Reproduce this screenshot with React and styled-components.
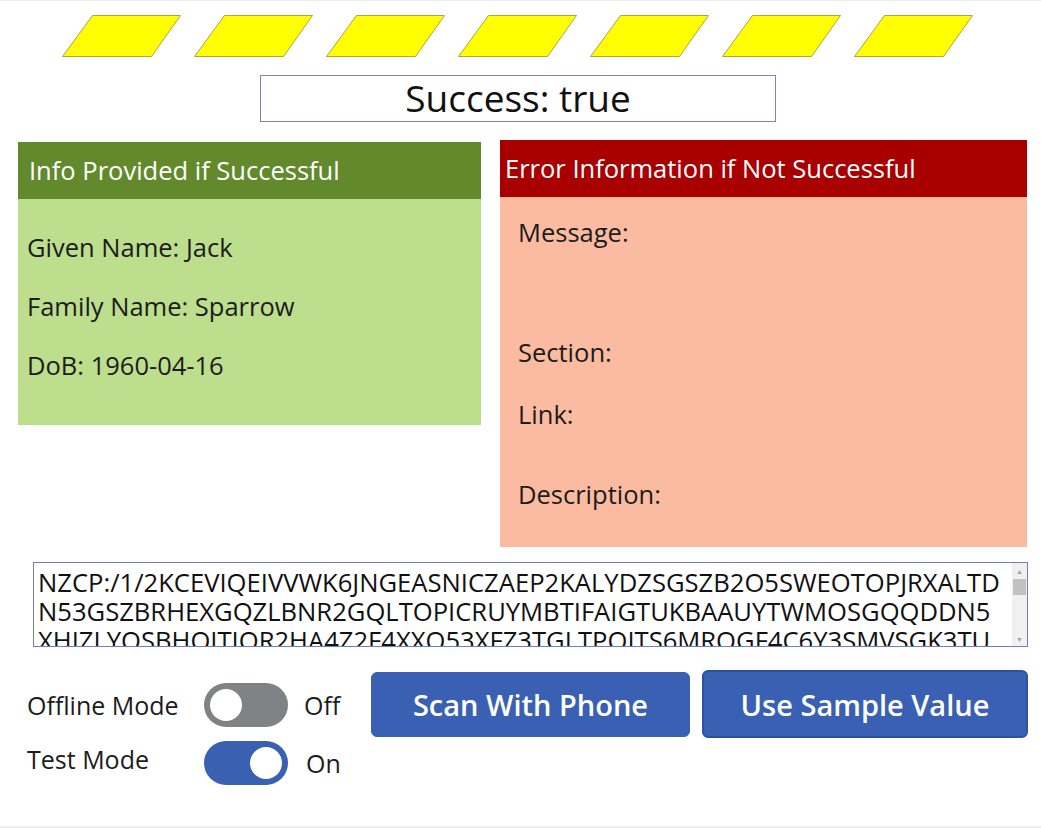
import styled, { createGlobalStyle } from "styled-components";

const GlobalStyle = createGlobalStyle`
  html, body {
    margin: 0;
    padding: 0;
    background: #ffffff;
  }
  body {
    font-family: "Open Sans", "Noto Sans", sans-serif;
    color: #1a1a1a;
  }
`;

const Screen = styled.div`
  width: 1041px;
  height: 828px;
  box-sizing: border-box;
  border-top: 1px solid #ececec;
  border-bottom: 2px solid #efefef;
  overflow: hidden;
  display: flex;
  flex-direction: column;
`;

const Stripes = styled.div`
  display: flex;
  gap: 12px;
  padding: 13px 0 0 62px;
  height: 43px;
`;

const Status = styled.div`
  margin: 18px 0 0 260px;
  width: 516px;
  height: 47px;
  box-sizing: border-box;
  border: 1px solid #7a86c2;
  display: flex;
  align-items: center;
  justify-content: center;
  font-size: 37px;
  line-height: 1;
  color: #111;
  padding-bottom: 2px;
`;

const Panels = styled.div`
  display: flex;
  align-items: flex-start;
  gap: 19px;
  margin: 18px 0 0 18px;
`;

const Panel = styled.div`
  width: ${(p) => p.$w}px;
  margin-top: ${(p) => p.$top || 0}px;
  display: flex;
  flex-direction: column;
`;

const PanelHead = styled.div`
  height: 57px;
  background: ${(p) => p.$bg};
  color: #fff;
  font-size: 25.5px;
  display: flex;
  align-items: center;
  padding-left: ${(p) => p.$pad}px;
  padding-bottom: 2px;
  box-sizing: border-box;
  white-space: nowrap;
`;

const PanelBody = styled.div`
  height: ${(p) => p.$h}px;
  background: ${(p) => p.$bg};
  box-sizing: border-box;
  padding: ${(p) => p.$pad};
  display: flex;
  flex-direction: column;
`;

const Line = styled.div`
  font-size: 25.5px;
  line-height: 32px;
  height: ${(p) => p.$h}px;
  color: #1c1c1c;
`;

const CodeBox = styled.div`
  margin: 15px 0 0 33px;
  width: 995px;
  height: 85px;
  box-sizing: border-box;
  border: 1px solid #6f7fc0;
  display: flex;
  overflow: hidden;
`;

const CodeText = styled.div`
  flex: 1;
  overflow: hidden;
  padding: 5px 0 0 4px;
`;

const CodeLine = styled.div`
  font-size: 25.6px;
  line-height: 29px;
  white-space: pre;
  color: #111;
`;

const ScrollTrack = styled.div`
  width: 15px;
  background: #f0f0f0;
  display: flex;
  flex-direction: column;
  align-items: center;
`;

const Arrow = styled.div`
  height: 14px;
  display: flex;
  align-items: center;
  justify-content: center;
  font-size: 7px;
  color: #a3a3a3;
  margin-top: ${(p) => p.$top || 0}px;
`;

const Thumb = styled.div`
  width: 13px;
  height: 16px;
  background: #c1c1c1;
  margin-top: 1px;
`;

const Bottom = styled.div`
  display: flex;
  margin: 23px 0 0 27px;
  align-items: flex-start;
`;

const Toggles = styled.div`
  display: flex;
  flex-direction: column;
  width: 344px;
  padding-top: 12px;
`;

const ToggleRow = styled.div`
  display: flex;
  align-items: center;
  height: 46px;
  margin-bottom: ${(p) => p.$mb || 0}px;
`;

const ToggleLabel = styled.div`
  width: 177px;
  font-size: 25px;
  color: #1c1c1c;
  white-space: nowrap;
  transform: translateY(${(p) => p.$dy || 0}px);
`;

const Switch = styled.div`
  width: 84px;
  height: 44px;
  border-radius: 22px;
  background: ${(p) => (p.$on ? "#3a60b2" : "#818285")};
  display: flex;
  align-items: center;
  justify-content: ${(p) => (p.$on ? "flex-end" : "flex-start")};
  padding: 0 6px;
  box-sizing: border-box;
`;

const Knob = styled.div`
  width: 32px;
  height: 32px;
  border-radius: 50%;
  background: #fff;
`;

const ToggleValue = styled.div`
  margin-left: ${(p) => p.$ml}px;
  font-size: 25px;
  color: #1c1c1c;
`;

const Button = styled.button`
  width: ${(p) => p.$w}px;
  height: ${(p) => p.$h}px;
  margin-top: ${(p) => p.$top || 0}px;
  margin-right: 12px;
  background: #3960b3;
  border: ${(p) => (p.$outlined ? "2px solid #2f51a0" : "1px solid #3960b3")};
  border-radius: 6px;
  color: #fff;
  font-family: "Open Sans", "Noto Sans", sans-serif;
  font-size: 29px;
  font-weight: 600;
  cursor: pointer;
  padding: 0;
`;

function Stripe() {
  return (
    <svg width="120" height="44" viewBox="0 0 120 44">
      <polygon
        points="30.5,1.5 118.5,1.5 89.5,42.5 0.5,42.5"
        fill="#ffff00"
        stroke="#a8a64a"
        strokeWidth="1"
      />
    </svg>
  );
}

const codeLines = [
  "NZCP:/1/2KCEVIQEIVVWK6JNGEASNICZAEP2KALYDZSGSZB2O5SWEOTOPJRXALTD",
  "N53GSZBRHEXGQZLBNR2GQLTOPICRUYMBTIFAIGTUKBAAUYTWMOSGQQDDN5",
  "XHIZLYOSBHOITIQR2HA4Z2F4XXQ53XFZ3TGLTPOITS6MROGF4C6Y3SMVSGK3TU",
];

export default function App() {
  return (
    <>
      <GlobalStyle />
      <Screen>
        <Stripes>
          {Array.from({ length: 7 }).map((_, i) => (
            <Stripe key={i} />
          ))}
        </Stripes>

        <Status>Success: true</Status>

        <Panels>
          <Panel $w={463} $top={2}>
            <PanelHead $bg="#628a2c" $pad={11}>
              Info Provided if Successful
            </PanelHead>
            <PanelBody $bg="#bdde8c" $h={226} $pad="32px 0 0 9px">
              <Line $h={59}>Given Name: Jack</Line>
              <Line $h={59}>Family Name: Sparrow</Line>
              <Line $h={59}>DoB: 1960-04-16</Line>
            </PanelBody>
          </Panel>

          <Panel $w={527}>
            <PanelHead $bg="#a80000" $pad={5}>
              Error Information if Not Successful
            </PanelHead>
            <PanelBody $bg="#fbbba0" $h={350} $pad="19px 0 0 18px">
              <Line $h={120}>Message:</Line>
              <Line $h={62}>Section:</Line>
              <Line $h={80}>Link:</Line>
              <Line $h={40}>Description:</Line>
            </PanelBody>
          </Panel>
        </Panels>

        <CodeBox>
          <CodeText>
            {codeLines.map((l) => (
              <CodeLine key={l}>{l}</CodeLine>
            ))}
          </CodeText>
          <ScrollTrack>
            <Arrow $top={1}>▲</Arrow>
            <Thumb />
            <Arrow $top={37}>▼</Arrow>
          </ScrollTrack>
        </CodeBox>

        <Bottom>
          <Toggles>
            <ToggleRow $mb={12}>
              <ToggleLabel>Offline Mode</ToggleLabel>
              <Switch>
                <Knob />
              </Switch>
              <ToggleValue $ml={16}>Off</ToggleValue>
            </ToggleRow>
            <ToggleRow>
              <ToggleLabel $dy={-4}>Test Mode</ToggleLabel>
              <Switch $on>
                <Knob />
              </Switch>
              <ToggleValue $ml={18}>On</ToggleValue>
            </ToggleRow>
          </Toggles>
          <Button $w={319} $h={65} $top={2}>
            Scan With Phone
          </Button>
          <Button $w={326} $h={68} $outlined>
            Use Sample Value
          </Button>
        </Bottom>
      </Screen>
    </>
  );
}
